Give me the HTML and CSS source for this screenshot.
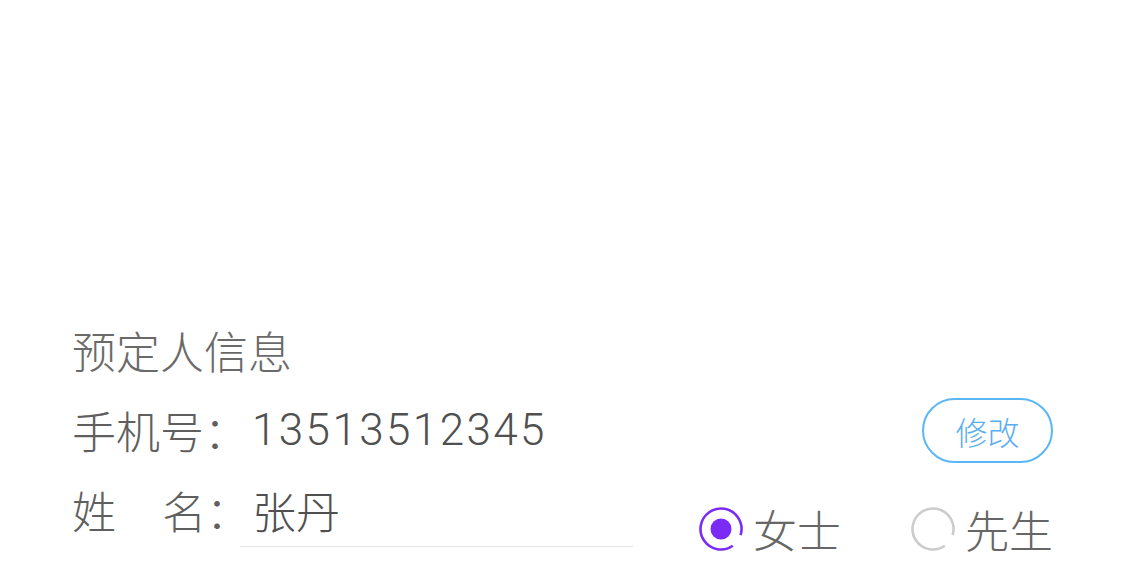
FILE: index.html
```html
<!DOCTYPE html>
<html lang="zh-CN">
<head>
<meta charset="utf-8">
<title>预定人信息</title>
<link rel="stylesheet" href="styles.css">
</head>
<body>
<div class="page">
  <section class="booker">
    <div class="title">预定人信息</div>
    <div class="row phone-row">
      <div class="field">
        <span class="label label-phone">手机号：</span>
        <span class="phone">13513512345</span>
      </div>
      <button class="edit-btn" type="button">修改</button>
    </div>
    <div class="row name-row">
      <div class="field">
        <span class="label label-name"><span class="label-k"><span>姓</span><span>名</span></span><span class="colon">：</span></span>
        <div class="name-input">张丹</div>
      </div>
      <div class="gender">
        <label class="radio">
          <svg class="radio-ico" viewBox="0 0 44 44" width="44" height="44">
            <circle cx="22" cy="22" r="20.5" fill="none" stroke="#7a2cf6" stroke-width="2.6" stroke-dasharray="114.5 14.3" transform="rotate(55 22 22)"/>
            <circle cx="22" cy="22" r="10.5" fill="#7a2cf6"/>
          </svg>
          <span class="radio-text">女士</span>
        </label>
        <label class="radio">
          <svg class="radio-ico" viewBox="0 0 44 44" width="44" height="44">
            <circle cx="22" cy="22" r="20.5" fill="none" stroke="#cccccc" stroke-width="2.6" stroke-dasharray="114.5 14.3" transform="rotate(55 22 22)"/>
          </svg>
          <span class="radio-text">先生</span>
        </label>
      </div>
    </div>
  </section>
</div>
</body>
</html>
```

FILE: styles.css
```css
html, body {
  margin: 0;
  padding: 0;
  background: #ffffff;
}

body {
  font-family: "Noto Sans CJK SC", "Noto Sans", sans-serif;
  font-weight: 300;
  color: #5f5f5f;
}

.page {
  width: 1125px;
  height: 578px;
  overflow: hidden;
}

.booker {
  padding: 310px 72px 0 72px;
}

.title {
  font-size: 44px;
  line-height: 80px;
  color: #6a6a6a;
}

.row {
  display: flex;
  justify-content: space-between;
}

.phone-row {
  align-items: center;
  height: 80px;
}

.field {
  display: flex;
  align-items: flex-start;
}

.label {
  font-size: 44px;
  line-height: 80px;
  color: #5f5f5f;
  white-space: nowrap;
}

.label-phone {
  width: 180px;
}

.label-name {
  flex: none;
  width: 168px;
  display: flex;
}

.label-k {
  flex: none;
  display: flex;
  justify-content: space-between;
  width: 134px;
}

.colon {
  flex: none;
}

.phone {
  font-family: "Roboto", "Noto Sans CJK SC", sans-serif;
  font-weight: 300;
  font-size: 44px;
  line-height: 80px;
  letter-spacing: 2.4px;
  color: #505050;
}

.edit-btn {
  box-sizing: border-box;
  width: 131px;
  height: 65px;
  border: 2.5px solid #5ab7f6;
  border-radius: 33px;
  background: #ffffff;
  color: #5aaef0;
  font-family: "Noto Sans CJK SC", sans-serif;
  font-weight: 300;
  font-size: 32px;
  line-height: 1;
  padding: 0;
  margin-top: 1px;
}

.name-row {
  align-items: flex-start;
}

.name-input {
  flex: none;
  box-sizing: border-box;
  width: 393px;
  height: 77px;
  padding-left: 12px;
  font-size: 44px;
  line-height: 80px;
  color: #505050;
  border-bottom: 1.5px solid #e4e4e4;
}

.gender {
  display: flex;
  align-items: center;
  gap: 70px;
  margin-top: 37px;
}

.radio {
  display: flex;
  align-items: center;
  gap: 10px;
}

.radio-ico {
  display: block;
}

.radio-text {
  font-size: 44px;
  line-height: 44px;
  color: #666666;
}
```
